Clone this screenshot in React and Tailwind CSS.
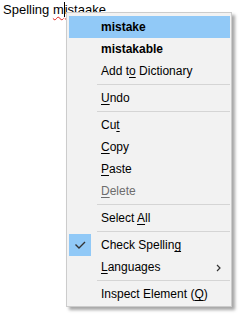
import React from 'react';

const items = [
  { label: 'mistake', bold: true, active: true },
  { label: 'mistakable', bold: true },
  { label: ['Add t', 'o', ' Dictionary'] },
  'sep',
  { label: ['', 'U', 'ndo'] },
  'sep',
  { label: ['Cu', 't', ''] },
  { label: ['', 'C', 'opy'] },
  { label: ['', 'P', 'aste'] },
  { label: ['', 'D', 'elete'], disabled: true },
  'sep',
  { label: ['Select ', 'A', 'll'] },
  'sep',
  { label: ['Check Spellin', 'g', ''], checked: true },
  { label: ['', 'L', 'anguages'], submenu: true },
  'sep',
  { label: ['Inspect Element (', 'Q', ')'] },
];

function Label({ label }) {
  if (typeof label === 'string') return <span>{label}</span>;
  return (
    <span>
      {label[0]}
      <span className="underline underline-offset-[2px]">{label[1]}</span>
      {label[2]}
    </span>
  );
}

export default function App() {
  return (
    <div className="relative w-[246px] h-[315px] bg-white overflow-hidden" style={{ fontFamily: '"Liberation Sans", Arial, sans-serif' }}>
      {/* editable text */}
      <div className="pl-[3px] pt-[1px] text-[13px] leading-[18px] text-black">
        Spelling{' '}
        <span className="underline decoration-wavy decoration-[#e0201a] decoration-1 underline-offset-[2px]">
          m<span className="inline-block w-px h-[15px] bg-black align-[-3px]"></span>istaake
        </span>
      </div>

      {/* context menu */}
      <div className="absolute left-[66px] top-[12px] w-[166px] border border-[#cccccc] bg-[#f2f2f2] pt-[3px] pb-[1px] pl-[2px] pr-[1px] shadow-[3px_3px_3px_rgba(0,0,0,0.35)] text-[12px] text-black">
        {items.map((it, i) =>
          it === 'sep' ? (
            <div key={i} className="h-[5px] flex items-center pl-[28px]">
              <div className="h-px w-full bg-[#d5d5d5]" />
            </div>
          ) : (
            <div
              key={i}
              className={`relative h-[22px] leading-[22px] pl-[32px] ${it.active ? 'bg-[#91c9f7]' : ''} ${it.bold ? 'font-bold' : ''} ${it.disabled ? 'text-[#6d6d6d]' : ''}`}
            >
              {it.checked && (
                <div className="absolute left-0 top-0 w-[22px] h-[22px] bg-[#91c9f7]">
                  <svg width="22" height="22" viewBox="0 0 22 22">
                    <polyline points="6.5,10.5 10,14 16,8" fill="none" stroke="#333" strokeWidth="1.4" />
                  </svg>
                </div>
              )}
              <Label label={it.label} />
              {it.submenu && (
                <svg className="absolute right-[8px] top-[8px]" width="6" height="8" viewBox="0 0 6 8">
                  <polyline points="1,1 4,4 1,7" fill="none" stroke="#333" strokeWidth="1.2" />
                </svg>
              )}
            </div>
          )
        )}
      </div>
    </div>
  );
}
